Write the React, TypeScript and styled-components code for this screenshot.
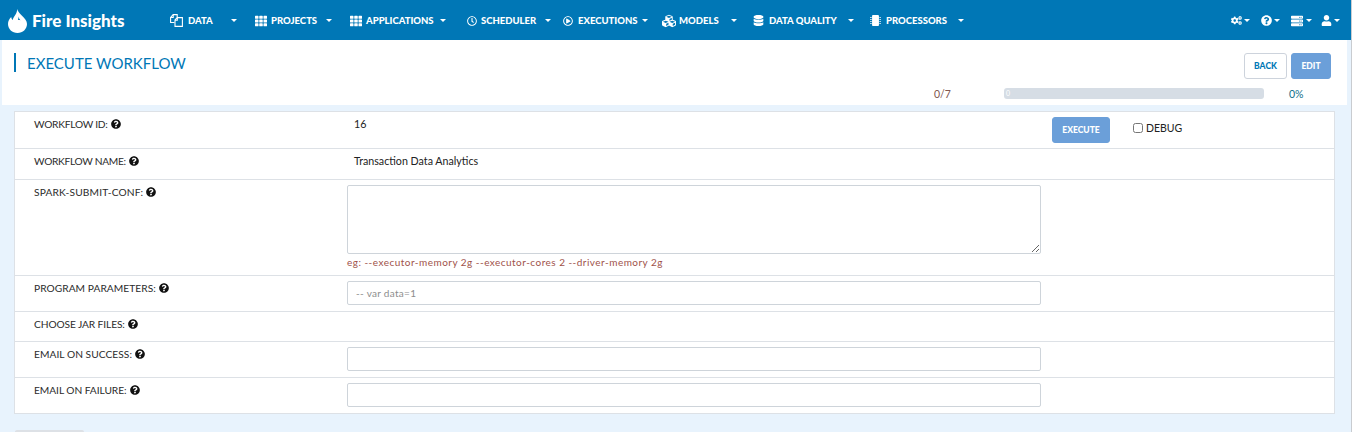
import React from 'react';
import styled, { createGlobalStyle } from 'styled-components';
import {
  FaTh,
  FaRegClock,
  FaRegPlayCircle,
  FaCubes,
  FaDatabase,
  FaMicrochip,
  FaCogs,
  FaQuestionCircle,
  FaServer,
  FaUser,
} from 'react-icons/fa';

const GlobalStyle = createGlobalStyle`
  html, body {
    margin: 0;
    height: 432px;
    overflow: hidden;
    background: #e8f3fd;
    font-family: "Lato", "Liberation Sans", sans-serif;
  }
  * { box-sizing: border-box; }
`;

const Page = styled.div`
  width: 1352px;
  height: 432px;
  display: flex;
  flex-direction: column;
  border-right: 1px solid #c9ccd0;
`;

const TopNavigation = styled.div`
  height: 40px;
  flex: none;
  background-color: #0077b6;
  display: flex;
  align-items: center;
  padding-top: 1px;
  color: #fff;
`;

const Logo = styled.div`
  width: 170px;
  padding-left: 8px;
  display: flex;
  align-items: center;
  gap: 5px;
  font-size: 17px;
  font-weight: 900;
`;

const NavList = styled.div`
  display: flex;
  flex: 1;
`;

const NavItem = styled.div<{ $width: number; $iconSize: number }>`
  width: ${(p) => p.$width}px;
  display: flex;
  align-items: center;
  font-size: 9.5px;
  font-weight: 900;
  white-space: nowrap;
  svg { font-size: ${(p) => p.$iconSize}px; flex: none; }
`;

const NavLabel = styled.span<{ $left: number }>`
  margin-left: ${(p) => p.$left}px;
`;

const Caret = styled.span<{ $left?: number }>`
  margin-left: ${(p) => p.$left ?? 2}px;
  width: 0;
  height: 0;
  border-left: 3px solid transparent;
  border-right: 3px solid transparent;
  border-top: 3px solid #fff;
  flex: none;
`;

const UserTools = styled.div`
  display: flex;
  align-items: center;
`;

const ToolItem = styled.div<{ $iconSize: number }>`
  width: 30px;
  display: flex;
  align-items: center;
  svg { font-size: ${(p) => p.$iconSize}px; flex: none; }
`;

const TitlePanel = styled.div`
  flex: none;
  height: 65px;
  margin: 0 4px 0 2px;
  background: #fff;
  display: flex;
  justify-content: space-between;
  padding: 13px 16px 0 12px;
`;

const Title = styled.h1`
  margin: 0;
  height: 19px;
  border-left: 2px solid #0077b6;
  padding-left: 11px;
  font-size: 15px;
  font-weight: 400;
  line-height: 20px;
  color: #0077b6;
`;

const TitleSide = styled.div`
  display: flex;
  flex-direction: column;
  align-items: flex-end;
`;

const ButtonRow = styled.div`
  display: flex;
  gap: 4px;
`;

const Button = styled.button<{ $outline?: boolean; $width: number }>`
  width: ${(p) => p.$width}px;
  height: 26px;
  border-radius: 3px;
  border: 1px solid ${(p) => (p.$outline ? '#cdd3dc' : '#6b9fd9')};
  background: ${(p) => (p.$outline ? '#fff' : '#6b9fd9')};
  color: ${(p) => (p.$outline ? '#0077b6' : '#fff')};
  font-family: inherit;
  font-size: 8.5px;
  font-weight: 900;
  padding: 0;
`;

const ProgressRow = styled.div`
  margin-top: 8px;
  display: flex;
  align-items: center;
  font-size: 10.5px;
  height: 13px;
`;

const ProgressCount = styled.span`
  color: #80564f;
  width: 70px;
`;

const ProgressTrack = styled.div`
  width: 260px;
  height: 11px;
  border-radius: 3px;
  background: #d6dde5;
  color: #fff;
  font-size: 7px;
  line-height: 11px;
  padding-left: 2px;
`;

const ProgressPercent = styled.span`
  width: 67px;
  padding-left: 25px;
  color: #0f6f8c;
`;

const Card = styled.div`
  margin: 6px 16px 0 14px;
  background: #fff;
  border: 1px solid #dde1e6;
`;

const Row = styled.div<{ $height: number }>`
  height: ${(p) => p.$height}px;
  display: grid;
  grid-template-columns: 313px 694px 1fr;
  border-bottom: 1px solid #dde1e6;
  padding-left: 19px;
  &:last-child { border-bottom: 0; }
`;

const Label = styled.div<{ $spacing?: number }>`
  display: flex;
  align-items: flex-start;
  gap: 3px;
  padding-top: 6px;
  font-size: 10.2px;
  line-height: 13px;
  letter-spacing: ${(p) => p.$spacing ?? 0}px;
  color: #2b2b2b;
  svg { font-size: 10px; color: #111; margin-top: 1px; flex: none; }
`;

const Value = styled.div`
  padding: 5px 0 0 7px;
  font-size: 10.7px;
  line-height: 13px;
  color: #222;
`;

const Field = styled.div`
  padding-top: 5px;
`;

const TextInput = styled.input`
  display: block;
  width: 100%;
  height: 24px;
  border: 1px solid #ced4da;
  border-radius: 2px;
  padding: 0 8px;
  font-family: inherit;
  font-size: 10px;
  letter-spacing: 0.3px;
  outline: none;
  &::placeholder { color: #8d8d8d; }
`;

const TextArea = styled.textarea`
  display: block;
  width: 100%;
  height: 69px;
  border: 1px solid #ced4da;
  border-radius: 2px;
  outline: none;
  margin: 0;
`;

const Hint = styled.div`
  margin-top: 2px;
  font-size: 10px;
  line-height: 13px;
  letter-spacing: 0.47px;
  color: #a0524a;
`;

const ActionCell = styled.div`
  display: flex;
  align-items: flex-start;
  padding: 5px 0 0 11px;
  gap: 23px;
`;

const DebugLabel = styled.label`
  display: flex;
  align-items: center;
  gap: 3px;
  padding-top: 5px;
  font-size: 10.5px;
  color: #222;
  input { margin: 0; width: 10px; height: 10px; }
`;

const BottomButton = styled.div`
  margin: 16px 0 0 15px;
  width: 69px;
  height: 10px;
  background: #fff;
  border: 1px solid #dde1e6;
  border-radius: 3px 3px 0 0;
`;

const FireLogo = () => (
  <svg width="19" height="24" viewBox="0 0 19 24" fill="#fff">
    <path
      fillRule="evenodd"
      d="M9 0c1.2 3 3 4.6 5 6.8 2.8 2.8 5 5 5 8.2 0 5-4.2 9-9.5 9S0 20 0 15c0-2.7 1.2-5 3.2-7 .2 1.4.7 2.3 1.5 3C5.6 7 9.6 4.6 9 0zM10.4 7.6c.4 1.6 1 2.6 2 3.6-.8-.2-1.6-.4-2.4-.2.4-1 .5-2.2.4-3.4z"
    />
  </svg>
);

const FilesIcon = () => (
  <svg width="13" height="13" viewBox="0 0 13 13" fill="none" stroke="#fff" strokeWidth="1.1">
    <path d="M4.5 8.5H.6V3.4L3.2.6h4v3" />
    <path d="M3.2.8v2.7H.8" />
    <path d="M5 12.4V6l2.3-2.4h5.1v8.8z" />
    <path d="M7.3 3.8v2.4H5" />
  </svg>
);

const Help = () => <FaQuestionCircle />;

const navItems = [
  { icon: <FilesIcon />, label: 'DATA', width: 85, iconSize: 13, left: 5, caret: 18 },
  { icon: <FaTh />, label: 'PROJECTS', width: 95, iconSize: 12, left: 4, caret: 9 },
  { icon: <FaTh />, label: 'APPLICATIONS', width: 117, iconSize: 12, left: 4, caret: 6 },
  { icon: <FaRegClock />, label: 'SCHEDULER', width: 96, iconSize: 10, left: 4, caret: 9 },
  { icon: <FaRegPlayCircle />, label: 'EXECUTIONS', width: 99, iconSize: 10, left: 5, caret: 5 },
  { icon: <FaCubes />, label: 'MODELS', width: 91, iconSize: 14, left: 3, caret: 12 },
  { icon: <FaDatabase />, label: 'DATA QUALITY', width: 117, iconSize: 11, left: 5, caret: 11 },
  { icon: <FaMicrochip />, label: 'PROCESSORS', width: 100, iconSize: 11, left: 5, caret: 11 },
];

export default function App() {
  return (
    <Page>
      <GlobalStyle />
      <TopNavigation>
        <Logo>
          <FireLogo />
          Fire Insights
        </Logo>
        <NavList>
          {navItems.map((item) => (
            <NavItem key={item.label} $width={item.width} $iconSize={item.iconSize}>
              {item.icon}
              <NavLabel $left={item.left}>{item.label}</NavLabel>
              <Caret $left={item.caret} />
            </NavItem>
          ))}
        </NavList>
        <UserTools>
          <ToolItem $iconSize={11}><FaCogs /><Caret /></ToolItem>
          <ToolItem $iconSize={11}><FaQuestionCircle /><Caret /></ToolItem>
          <ToolItem $iconSize={12}><FaServer /><Caret $left={3} /></ToolItem>
          <ToolItem $iconSize={11}><FaUser /><Caret /></ToolItem>
        </UserTools>
      </TopNavigation>

      <TitlePanel>
        <Title>EXECUTE WORKFLOW</Title>
        <TitleSide>
          <ButtonRow>
            <Button $outline $width={43}>BACK</Button>
            <Button $width={40}>EDIT</Button>
          </ButtonRow>
          <ProgressRow>
            <ProgressCount>0/7</ProgressCount>
            <ProgressTrack>0</ProgressTrack>
            <ProgressPercent>0%</ProgressPercent>
          </ProgressRow>
        </TitleSide>
      </TitlePanel>

      <Card>
        <Row $height={37}>
          <Label $spacing={-0.25}>WORKFLOW ID: <Help /></Label>
          <Value>16</Value>
          <ActionCell>
            <Button $width={58}>EXECUTE</Button>
            <DebugLabel><input type="checkbox" /> DEBUG</DebugLabel>
          </ActionCell>
        </Row>
        <Row $height={31}>
          <Label $spacing={-0.3}>WORKFLOW NAME: <Help /></Label>
          <Value>Transaction Data Analytics</Value>
        </Row>
        <Row $height={96}>
          <Label $spacing={0.15}>SPARK-SUBMIT-CONF: <Help /></Label>
          <Field>
            <TextArea />
            <Hint>eg: --executor-memory 2g --executor-cores 2 --driver-memory 2g</Hint>
          </Field>
        </Row>
        <Row $height={36}>
          <Label $spacing={0.05}>PROGRAM PARAMETERS: <Help /></Label>
          <Field><TextInput placeholder="-- var data=1" /></Field>
        </Row>
        <Row $height={30}>
          <Label $spacing={-0.1}>CHOOSE JAR FILES: <Help /></Label>
        </Row>
        <Row $height={36}>
          <Label $spacing={0.05}>EMAIL ON SUCCESS: <Help /></Label>
          <Field><TextInput /></Field>
        </Row>
        <Row $height={35}>
          <Label $spacing={-0.05}>EMAIL ON FAILURE: <Help /></Label>
          <Field><TextInput /></Field>
        </Row>
      </Card>
      <BottomButton />
    </Page>
  );
}
